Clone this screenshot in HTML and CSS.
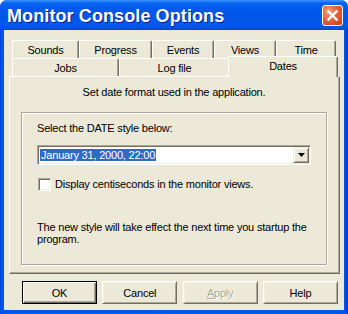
FILE: index.html
```html
<!DOCTYPE html>
<html>
<head>
<meta charset="utf-8">
<link rel="stylesheet" href="styles.css">
</head>
<body>
<div class="window">
  <div class="titlebar">
    <span class="title">Monitor Console Options</span>
    <span class="close">
      <svg width="21" height="21" viewBox="0 0 21 21">
        <path d="M6.5 6.5 L14.5 14.5 M14.5 6.5 L6.5 14.5" stroke="#fff" stroke-width="2.4" stroke-linecap="square"/>
      </svg>
    </span>
  </div>
  <div class="client">
    <div class="tabs">
      <div class="tabrow">
        <div class="tab t-sounds">Sounds</div>
        <div class="tab t-progress">Progress</div>
        <div class="tab t-events">Events</div>
        <div class="tab t-views">Views</div>
        <div class="tab t-time">Time</div>
      </div>
      <div class="tabrow">
        <div class="tab t-jobs">Jobs</div>
        <div class="tab t-log">Log file</div>
        <div class="tab t-dates selected">Dates</div>
      </div>
    </div>
    <div class="panel">
      <p class="intro">Set date format used in the application.</p>
      <div class="group">
        <p class="label">Select the DATE style below:</p>
        <div class="combo">
          <span class="combo-text"><span class="sel">January 31, 2000, 22:00</span></span>
          <span class="drop"><svg width="7" height="4" viewBox="0 0 7 4"><path d="M0 0 H7 L3.5 4 Z" fill="#000"/></svg></span>
        </div>
        <div class="check-row">
          <span class="checkbox"></span>
          <span class="check-label">Display centiseconds in the monitor views.</span>
        </div>
        <p class="note">The new style will take effect the next time you startup the<br>program.</p>
      </div>
    </div>
    <div class="buttons">
      <button class="btn default">OK</button>
      <button class="btn">Cancel</button>
      <button class="btn disabled"><u>A</u>pply</button>
      <button class="btn">Help</button>
    </div>
  </div>
</div>
</body>
</html>
```
FILE: styles.css
```css
* { box-sizing: border-box; }
html, body { margin: 0; padding: 0; }
body {
  width: 348px;
  height: 314px;
  overflow: hidden;
  background: #ffffff;
  font-family: "Liberation Sans", Arial, sans-serif;
  font-size: 11px;
  letter-spacing: -0.2px;
  color: #000;
}
p { margin: 0; }

.window {
  width: 348px;
  height: 314px;
  display: flex;
  flex-direction: column;
  background: linear-gradient(to right, #0831D9 0px, #0055EA 1px, #0058EE 3px, #0055EA 345px, #0831D9 347px);
  border-radius: 7px 7px 0 0;
  overflow: hidden;
}

.titlebar {
  flex: none;
  height: 30px;
  display: flex;
  align-items: center;
  justify-content: space-between;
  padding: 0 5px 0 7px;
  background: linear-gradient(to bottom, #3D95FF 0px, #0A66F0 3px, #0058EE 8px, #0056E8 16px, #0058EE 24px, #0053E0 28px, #0046C8 30px);
}
.title {
  color: #fff;
  font-family: "Liberation Sans", Arial, sans-serif;
  font-weight: bold;
  font-size: 18px;
  letter-spacing: 0.1px;
  line-height: 22px;
  text-shadow: 1px 1px #0A1E8C;
  margin-top: 1px;
}
.close {
  width: 21px;
  height: 21px;
  display: flex;
  border: 1px solid #fff;
  border-radius: 3px;
  background: radial-gradient(circle at 30% 30%, #F0A07C 0%, #E1643C 45%, #C4401A 100%);
  margin-top: 1px;
}
.close svg { margin: -1px; }

.client {
  flex: 1;
  margin: 0 4px 4px;
  background: #ECE9D8;
  display: flex;
  flex-direction: column;
  padding: 10px 4px 6px 5px;
}

.tabs {
  flex: none;
  display: flex;
  flex-direction: column;
  padding-left: 3px;
}
.tabrow {
  display: flex;
  height: 18px;
  align-items: flex-end;
}
.tab {
  height: 18px;
  display: flex;
  justify-content: center;
  padding-top: 2px;
  line-height: 14px;
  background: #ECE9D8;
  border-top: 1px solid #fff;
  border-left: 1px solid #fff;
  border-right: 1px solid #716F64;
  border-radius: 2px 2px 0 0;
  box-shadow: inset -1px 0 #ACA899;
}
.t-sounds { width: 67px; }
.t-progress { width: 73px; }
.t-events { width: 62px; }
.t-views { width: 62px; }
.t-time { width: 60px; }
.t-jobs { width: 107px; }
.t-log { width: 111px; }
.t-dates { width: 106px; }
.tab.selected {
  position: relative;
  z-index: 1;
  width: 110px;
  height: 21px;
  margin: 0 -2px -1px -2px;
  padding-top: 2px;
}

.panel {
  flex: 1;
  display: flex;
  flex-direction: column;
  border-style: solid;
  border-width: 1px;
  border-color: #fff #716F64 #716F64 #fff;
  box-shadow: inset -1px -1px #ACA899;
  padding: 9px 2px 0 1px;
}
.intro {
  line-height: 13px;
  text-align: center;
}
.group {
  flex: 1;
  margin: 13px 10px 8px 10px;
  border: 1px solid #ACA899;
  box-shadow: inset 1px 1px #fff, 1px 1px #fff;
  padding: 9px 0 0 15px;
  display: flex;
  flex-direction: column;
  align-items: flex-start;
}
.label { line-height: 13px; }

.combo {
  margin-top: 10px;
  width: 274px;
  height: 20px;
  display: flex;
  align-items: center;
  justify-content: space-between;
  background: #fff;
  border-style: solid;
  border-width: 1px;
  border-color: #ACA899 #fff #fff #ACA899;
  box-shadow: inset 1px 1px #716F64, inset -1px -1px #F1EFE2;
  padding: 1px 1px 1px 2px;
}
.combo-text { display: flex; }
.sel {
  background: #316AC5;
  color: #fff;
  line-height: 12px;
  padding: 0 1px;
}
.drop {
  width: 16px;
  height: 16px;
  display: flex;
  align-items: center;
  justify-content: center;
  background: #ECE9D8;
  border-style: solid;
  border-width: 1px;
  border-color: #F1EFE2 #716F64 #716F64 #F1EFE2;
  box-shadow: inset 1px 1px #fff, inset -1px -1px #ACA899;
}

.check-row {
  margin-top: 13px;
  display: flex;
  align-items: center;
  gap: 4px;
  padding-left: 1px;
}
.checkbox {
  width: 13px;
  height: 13px;
  background: #fff;
  border-style: solid;
  border-width: 1px;
  border-color: #ACA899 #fff #fff #ACA899;
  box-shadow: inset 1px 1px #716F64, inset -1px -1px #F1EFE2;
}
.check-label { line-height: 13px; }

.note {
  margin-top: 30px;
  line-height: 12px;
}

.buttons {
  flex: none;
  margin: 7px 2px 0 13px;
  display: flex;
  justify-content: space-between;
}
.btn {
  width: 75px;
  height: 23px;
  padding: 0;
  font-family: "Liberation Sans", Arial, sans-serif;
  font-size: 11px;
  letter-spacing: -0.2px;
  color: #000;
  background: #ECE9D8;
  border-style: solid;
  border-width: 1px;
  border-color: #fff #716F64 #716F64 #fff;
  box-shadow: inset 1px 1px #F1EFE2, inset -1px -1px #ACA899;
}
.btn.default {
  border: 1px solid #000;
  box-shadow: inset 1px 1px #fff, inset -1px -1px #716F64, inset -2px -2px #ACA899;
}
.btn.disabled {
  color: #ACA899;
  text-shadow: 1px 1px #fff;
}
```
